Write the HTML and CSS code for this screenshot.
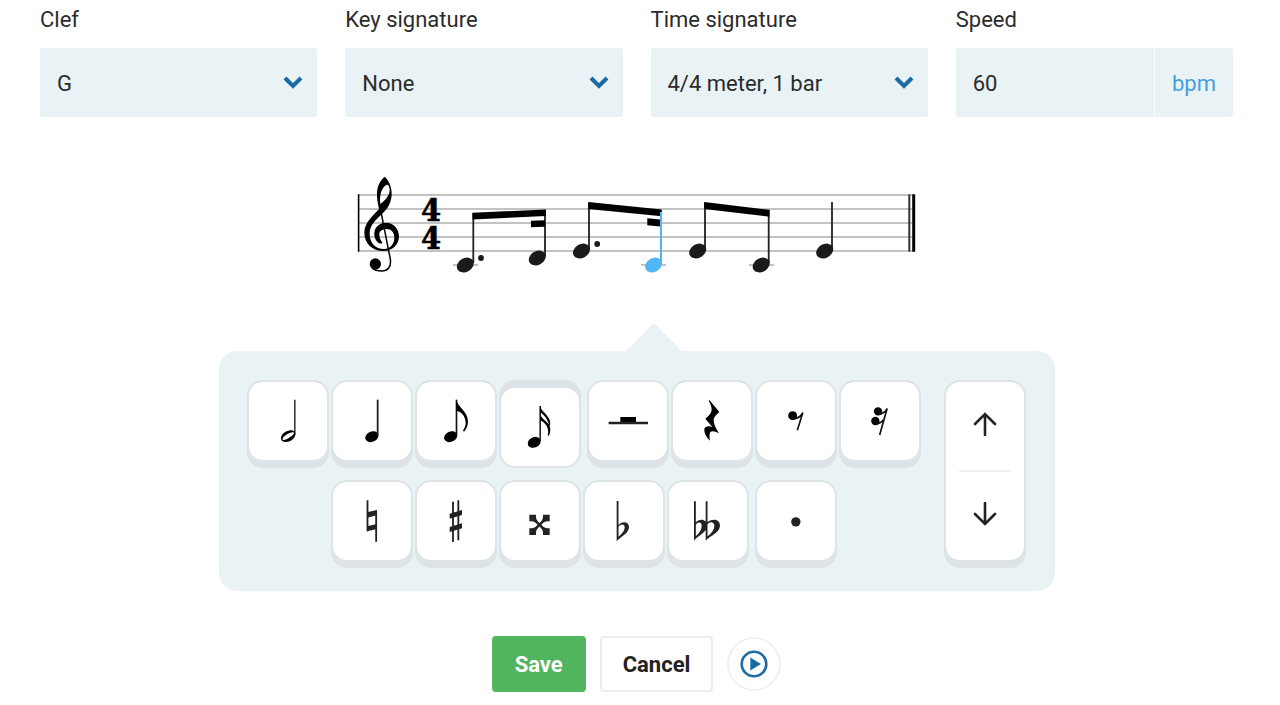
FILE: index.html
```html
<!DOCTYPE html>
<html lang="en">
<head>
<meta charset="utf-8">
<meta name="viewport" content="width=device-width, initial-scale=1">
<title>Score editor</title>
<link rel="stylesheet" href="styles.css">
</head>
<body>
<form class="editor">
  <div class="fields">
    <div class="field">
      <label class="field-label" for="clef">Clef</label>
      <div class="control">
        <select class="select" id="clef"><option>G</option></select>
        <svg class="chevron" viewBox="0 0 20 15"><path d="M2 3 L10 11 L18 3"/></svg>
      </div>
    </div>
    <div class="field">
      <label class="field-label" for="key">Key signature</label>
      <div class="control">
        <select class="select" id="key"><option>None</option></select>
        <svg class="chevron" viewBox="0 0 20 15"><path d="M2 3 L10 11 L18 3"/></svg>
      </div>
    </div>
    <div class="field">
      <label class="field-label" for="time">Time signature</label>
      <div class="control">
        <select class="select" id="time"><option>4/4 meter, 1 bar</option></select>
        <svg class="chevron" viewBox="0 0 20 15"><path d="M2 3 L10 11 L18 3"/></svg>
      </div>
    </div>
    <div class="field">
      <label class="field-label" for="speed">Speed</label>
      <div class="control">
        <input class="input" id="speed" type="text" value="60">
        <span class="unit">bpm</span>
      </div>
    </div>
  </div>

  <svg class="score" viewBox="349 170 575 110" role="img" aria-label="Score">
    <g class="staff">
      <path d="M358 195H914M358 209H914M358 223H914M358 237H914M358 251H914"/>
      <path d="M453 265H478M641 265H666M749 265H774"/>
    </g>
    <path d="M358.600 194.300V251.700" stroke="#000" stroke-width="1.600"/>
    <path d="M909.300 194.300V251.700" stroke="#333" stroke-width="2"/>
    <path d="M913.700 194.300V251.700" stroke="#000" stroke-width="3"/>
    <g transform="translate(340 160) scale(.33333)">
      <path fill-rule="evenodd" d="M134 50C148 62 156 84 155 104C154 128 143 145 128 160C108 180 89 194 89 222C89 249 107 267 132 267C152 267 163 250 163 233C163 216 152 206 138 207C124 208 117 216 118 225C119 237 124 243 127 248C124 252 120 251 115 248C106 241 102 232 103 219C104 202 118 188 138 188C160 188 177 206 177 229C177 254 158 273 130 273C97 273 73 250 73 218C73 190 95 171 117 147C113 128 110 112 111 98C112 78 120 62 134 50ZM141 74C133 76 116 94 121 132C135 122 150 105 149 90C149 82 146 74 141 74Z"/>
      <path d="M120 140L148 283C153 300 153 315 146 324C138 335 112 337 97 325" fill="none" stroke="#000" stroke-width="4.500"/>
      <circle cx="106" cy="312" r="17"/>
    </g>
    <text class="meter" x="431" y="221" text-anchor="middle">4</text>
    <text class="meter" x="431" y="249" text-anchor="middle">4</text>
    <g class="stems">
      <path d="M473.300 213V263M545 210V256M589 203V249M705 203V249M768.700 210V263M832 202V249"/>
    </g>
    <path d="M472.500 212.800L545.800 209.400V216L472.500 219.500ZM531 220.800L545 220.200V226.700L531 227.300ZM588.200 202L661.800 209.400V216.200L588.200 209ZM647.300 218.200L660 219.500V226.500L647.300 225.200ZM704.200 202L769.500 209.800V216.700L704.200 209Z"/>
    <path class="active-stem" d="M661 212V263"/>
    <g class="heads">
      <ellipse rx="9" ry="6.800" transform="translate(465.300 265) rotate(-30)"/>
      <ellipse rx="9" ry="6.800" transform="translate(537.300 258) rotate(-30)"/>
      <ellipse rx="9" ry="6.800" transform="translate(581.500 251) rotate(-30)"/>
      <ellipse class="active-head" rx="9" ry="6.800" transform="translate(653.600 265) rotate(-30)"/>
      <ellipse rx="9" ry="6.800" transform="translate(697.700 251) rotate(-30)"/>
      <ellipse rx="9" ry="6.800" transform="translate(761.200 265) rotate(-30)"/>
      <ellipse rx="9" ry="6.800" transform="translate(824.700 251) rotate(-30)"/>
      <circle cx="481" cy="258" r="2.900"/>
      <circle cx="597.200" cy="244" r="2.900"/>
    </g>
  </svg>

  <div class="panel">
    <svg class="pointer" viewBox="0 0 56 28"><path d="M28 0L56 28H0Z"/></svg>
    <div class="keys">
      <div class="key-row">
        <div class="key-group">
          <button class="key" type="button" aria-label="Half note"><svg viewBox="117 187 234 234"><path fill-rule="evenodd" d="M213 356C213 343 228 332 243 332C251 332 256 336 256 343C256 357 241 367 227 367C218 367 213 363 213 356ZM218 360C222 366 251 348 252 341C252 331 216 348 218 360Z"/><path d="M254.500 240V346" stroke="#111" stroke-width="4"/></svg></button>
          <button class="key" type="button" aria-label="Quarter note"><svg viewBox="368 187 234 234"><ellipse rx="20.500" ry="15.500" transform="translate(484.500 351) rotate(-25)"/><path d="M502 240V347" stroke="#222" stroke-width="5.500"/></svg></button>
          <button class="key" type="button" aria-label="Eighth note"><svg viewBox="620 187 234 234"><ellipse rx="20.500" ry="15.500" transform="translate(721 351) rotate(-25)"/><path d="M738.500 240V347" stroke="#111" stroke-width="5"/><path d="M738 240C741 262 773 274 773 305C773 319 768 329 761 336L758 333C765 323 768 312 765 302C762 286 752 276 738 273Z"/></svg></button>
          <button class="key key-pressed" type="button" aria-label="Sixteenth note" aria-pressed="true"><svg viewBox="33 204 234 234"><ellipse rx="20" ry="15.500" transform="translate(132.500 367) rotate(-25)"/><path d="M150.500 258V363" stroke="#111" stroke-width="4.500"/><path d="M150 258C153 275 181 286 181 312L178 318C174 300 164 285 150 277ZM150 282C153 298 181 306 181 328C181 336 179 343 176 348L173 346C179 328 168 308 150 301Z"/></svg></button>
        </div>
        <div class="key-group">
          <button class="key" type="button" aria-label="Half rest"><svg viewBox="297 187 234 234"><path d="M391 292H438V312H391Z"/><path d="M356 310H474" stroke="#222" stroke-width="8"/></svg></button>
          <button class="key" type="button" aria-label="Quarter rest"><svg viewBox="548 187 234 234"><path d="M657 241L687 277C675 288 670 294 670 302C670 314 677 326 686 341C672 333 660 332 658 342C657 350 658 358 659 363C648 353 641 340 642 328C644 319 655 318 666 322L645 297C656 288 663 281 664 270C664 260 660 252 655 243Z"/></svg></button>
          <button class="key" type="button" aria-label="Eighth rest"><svg viewBox="20 126 234 234"><circle cx="127" cy="227" r="13.500"/><path d="M128 237Q147 236 157 219L141 271" fill="none" stroke="#111" stroke-width="5" stroke-linejoin="round"/></svg></button>
          <button class="key" type="button" aria-label="Sixteenth rest"><svg viewBox="272 126 234 234"><circle cx="383" cy="214" r="12.500"/><circle cx="375" cy="243" r="12.500"/><path d="M384 223Q401 222 410 207L388 285M375 252Q391 251 399 240" fill="none" stroke="#111" stroke-width="5" stroke-linejoin="round"/></svg></button>
        </div>
      </div>
      <div class="key-row key-row-indent">
        <div class="key-group">
          <button class="key" type="button" aria-label="Natural"><svg viewBox="368 487 234 234"><path d="M471.500 542V635M497.500 573V666" stroke="#222" stroke-width="5.500"/><path d="M470 578L500 571V587L470 594ZM470 620L500 613V628L470 635Z" fill="#222"/></svg></button>
          <button class="key" type="button" aria-label="Sharp"><svg viewBox="620 487 234 234"><path d="M728 546V667M744 542V662" stroke="#222" stroke-width="5.500"/><path d="M718 582L755 571V586L718 597ZM718 622L755 611V626L718 637Z" fill="#222"/></svg></button>
          <button class="key" type="button" aria-label="Double sharp"><svg viewBox="32 487 234 234"><path fill="#222" d="M117 585H137V593C138 601 143 607 147.500 611C152 607 157 601 158 593V585H178V605H170C162 606 156 611 152 615.500C156 620 162 625 170 626H178V646H158V638C157 630 152 624 147.500 620C143 624 138 630 137 638V646H117V626H125C133 625 139 620 143 615.500C139 611 133 606 125 605H117Z"/><path d="M136 604L159 627M159 604L136 627" stroke="#222" stroke-width="7"/></svg></button>
          <button class="key" type="button" aria-label="Flat"><svg viewBox="283 487 234 234"><path fill="#222" fill-rule="evenodd" d="M378 544H383.500V616C389 610 395 608 401 608C409 608 415 614 415 622C415 642 390 650 378 665ZM383.500 621V651C394 643 402 634 402 623C402 612 390 612 383.500 621Z"/></svg></button>
          <button class="key" type="button" aria-label="Double flat"><svg viewBox="535 487 234 234"><path fill="#222" fill-rule="evenodd" d="M610 545H615.500V608C621 602 626 600 633 600C642 600 649 607 649 617C649 640 622 647 610 663ZM615.500 616V649C625 641 633 631 633 618C633 606 621 606 615.500 616Z"/><path fill="#222" fill-rule="evenodd" d="M645 545H650.500V607C657 602 664 600 671 600C681 600 688 607 688 617C688 640 660 647 645 663ZM650.500 614V650C662 641 671 631 671 618C671 606 657 604 650.500 614Z"/></svg></button>
        </div>
        <button class="key" type="button" aria-label="Dot"><svg viewBox="20 426 234 234"><circle cx="136.500" cy="545.500" r="14" fill="#222"/></svg></button>
      </div>
    </div>
    <div class="pitch">
      <button class="pitch-button" type="button" aria-label="Pitch up"><svg viewBox="0 0 24 24"><path d="M12 23V2M2 12L12 2L22 12"/></svg></button>
      <div class="pitch-divider"></div>
      <button class="pitch-button" type="button" aria-label="Pitch down"><svg viewBox="0 0 24 24"><path d="M12 1V22M2 12L12 22L22 12"/></svg></button>
    </div>
  </div>

  <div class="actions">
    <button class="button button-save" type="button">Save</button>
    <button class="button button-cancel" type="button">Cancel</button>
    <button class="play" type="button" aria-label="Play"><svg viewBox="0 0 28 28"><circle cx="14" cy="14" r="12.300"/><path d="M10.300 7.500L21 14L10.300 20.500Z"/></svg></button>
  </div>
</form>
</body>
</html>
```
FILE: styles.css
```css
* {
  box-sizing: border-box;
}

body {
  margin: 0;
  background: #fff;
  color: #2b2b2b;
  font: 22px/28px Roboto, "Liberation Sans", sans-serif;
}

button,
input,
select {
  margin: 0;
  padding: 0;
  border: 0;
  background: none;
  color: inherit;
  font: inherit;
}

button {
  cursor: pointer;
}

svg {
  display: block;
}

.editor {
  display: flex;
  flex-direction: column;
  align-items: center;
  padding: 6px 47px 13px 40px;
}

.fields {
  display: grid;
  grid-template-columns: repeat(4, minmax(0, 1fr));
  gap: 28px;
  width: 100%;
}

.field {
  display: flex;
  flex-direction: column;
  gap: 14px;
}

.control {
  position: relative;
  display: flex;
  height: 69px;
  border-radius: 3px;
  background: #e9f2f5;
}

.select {
  width: 100%;
  padding: 2px 48px 0 17px;
  appearance: none;
}

.chevron {
  position: absolute;
  top: 27px;
  right: 14px;
  width: 20px;
  height: 15px;
  fill: none;
  stroke: #1b6ba3;
  stroke-width: 4;
  pointer-events: none;
}

.input {
  flex: 1;
  min-width: 0;
  padding: 2px 17px 0;
}

.unit {
  display: flex;
  align-items: center;
  padding: 2px 17px 0;
  border-left: 1px solid #fff;
  color: #459fe0;
}

.score {
  width: 575px;
  max-width: 100%;
  margin-top: 53px;
}

.staff {
  stroke: #b0b0b0;
  stroke-width: 1.5;
}

.meter {
  font: bold 32px "DejaVu Serif Condensed", "DejaVu Serif", serif;
  stroke: #000;
  stroke-width: 0.6;
}

.stems {
  stroke: #222;
  stroke-width: 1.8;
}

.heads {
  fill: #1a1a1a;
}

.active-stem {
  stroke: #51b6f8;
  stroke-width: 2;
}

.active-head {
  fill: #51b6f8;
}

.panel {
  position: relative;
  display: flex;
  gap: 27px;
  margin-top: 71px;
  padding: 31px 31px 31px 30px;
  border-radius: 18px;
  background: #e9f2f5;
}

.pointer {
  position: absolute;
  bottom: 100%;
  left: 407px;
  width: 56px;
  height: 28px;
  fill: #e9f2f5;
}

.keys {
  display: flex;
  flex-direction: column;
  gap: 22px;
}

.key-row {
  display: flex;
  gap: 10px;
}

.key-row-indent {
  padding-left: 84px;
}

.key-group {
  display: flex;
  gap: 6px;
}

.key,
.pitch {
  width: 78px;
  border-radius: 14px;
  background: #fff;
  box-shadow: 0 0 0 2px #dde3e6, 0 6px 0 2px #dde3e6;
}

.key {
  height: 78px;
}

.key svg {
  width: 78px;
  height: 78px;
}

.key-pressed {
  box-shadow: 0 0 0 2px #dde3e6, 0 -6px 0 2px #dde3e6;
  transform: translateY(6px);
}

.pitch {
  display: flex;
  flex-direction: column;
  align-items: center;
}

.pitch-button {
  display: flex;
  flex: 1;
  align-items: center;
  justify-content: center;
  width: 100%;
  padding-bottom: 4px;
}

.pitch-button svg {
  width: 24px;
  height: 24px;
  fill: none;
  stroke: #222;
  stroke-width: 2.6;
  stroke-linecap: round;
}

.pitch-divider {
  width: 52px;
  height: 2px;
  background: #f0f0f0;
}

.actions {
  display: flex;
  align-items: center;
  gap: 14px;
  margin-top: 45px;
}

.button {
  height: 56px;
  padding: 2px 21px 0;
  border: 2px solid #ececec;
  border-radius: 4px;
  color: #222;
  font-weight: 700;
}

.button-save {
  border-color: #51b45f;
  background: #51b45f;
  color: #fff;
}

.play {
  display: flex;
  align-items: center;
  justify-content: center;
  width: 54px;
  height: 54px;
  border: 2px solid #f0f0f0;
  border-radius: 50%;
}

.play svg {
  width: 28px;
  height: 28px;
}

.play circle {
  fill: none;
  stroke: #1b6ba3;
  stroke-width: 2.6;
}

.play path {
  fill: #1b6ba3;
}
```
